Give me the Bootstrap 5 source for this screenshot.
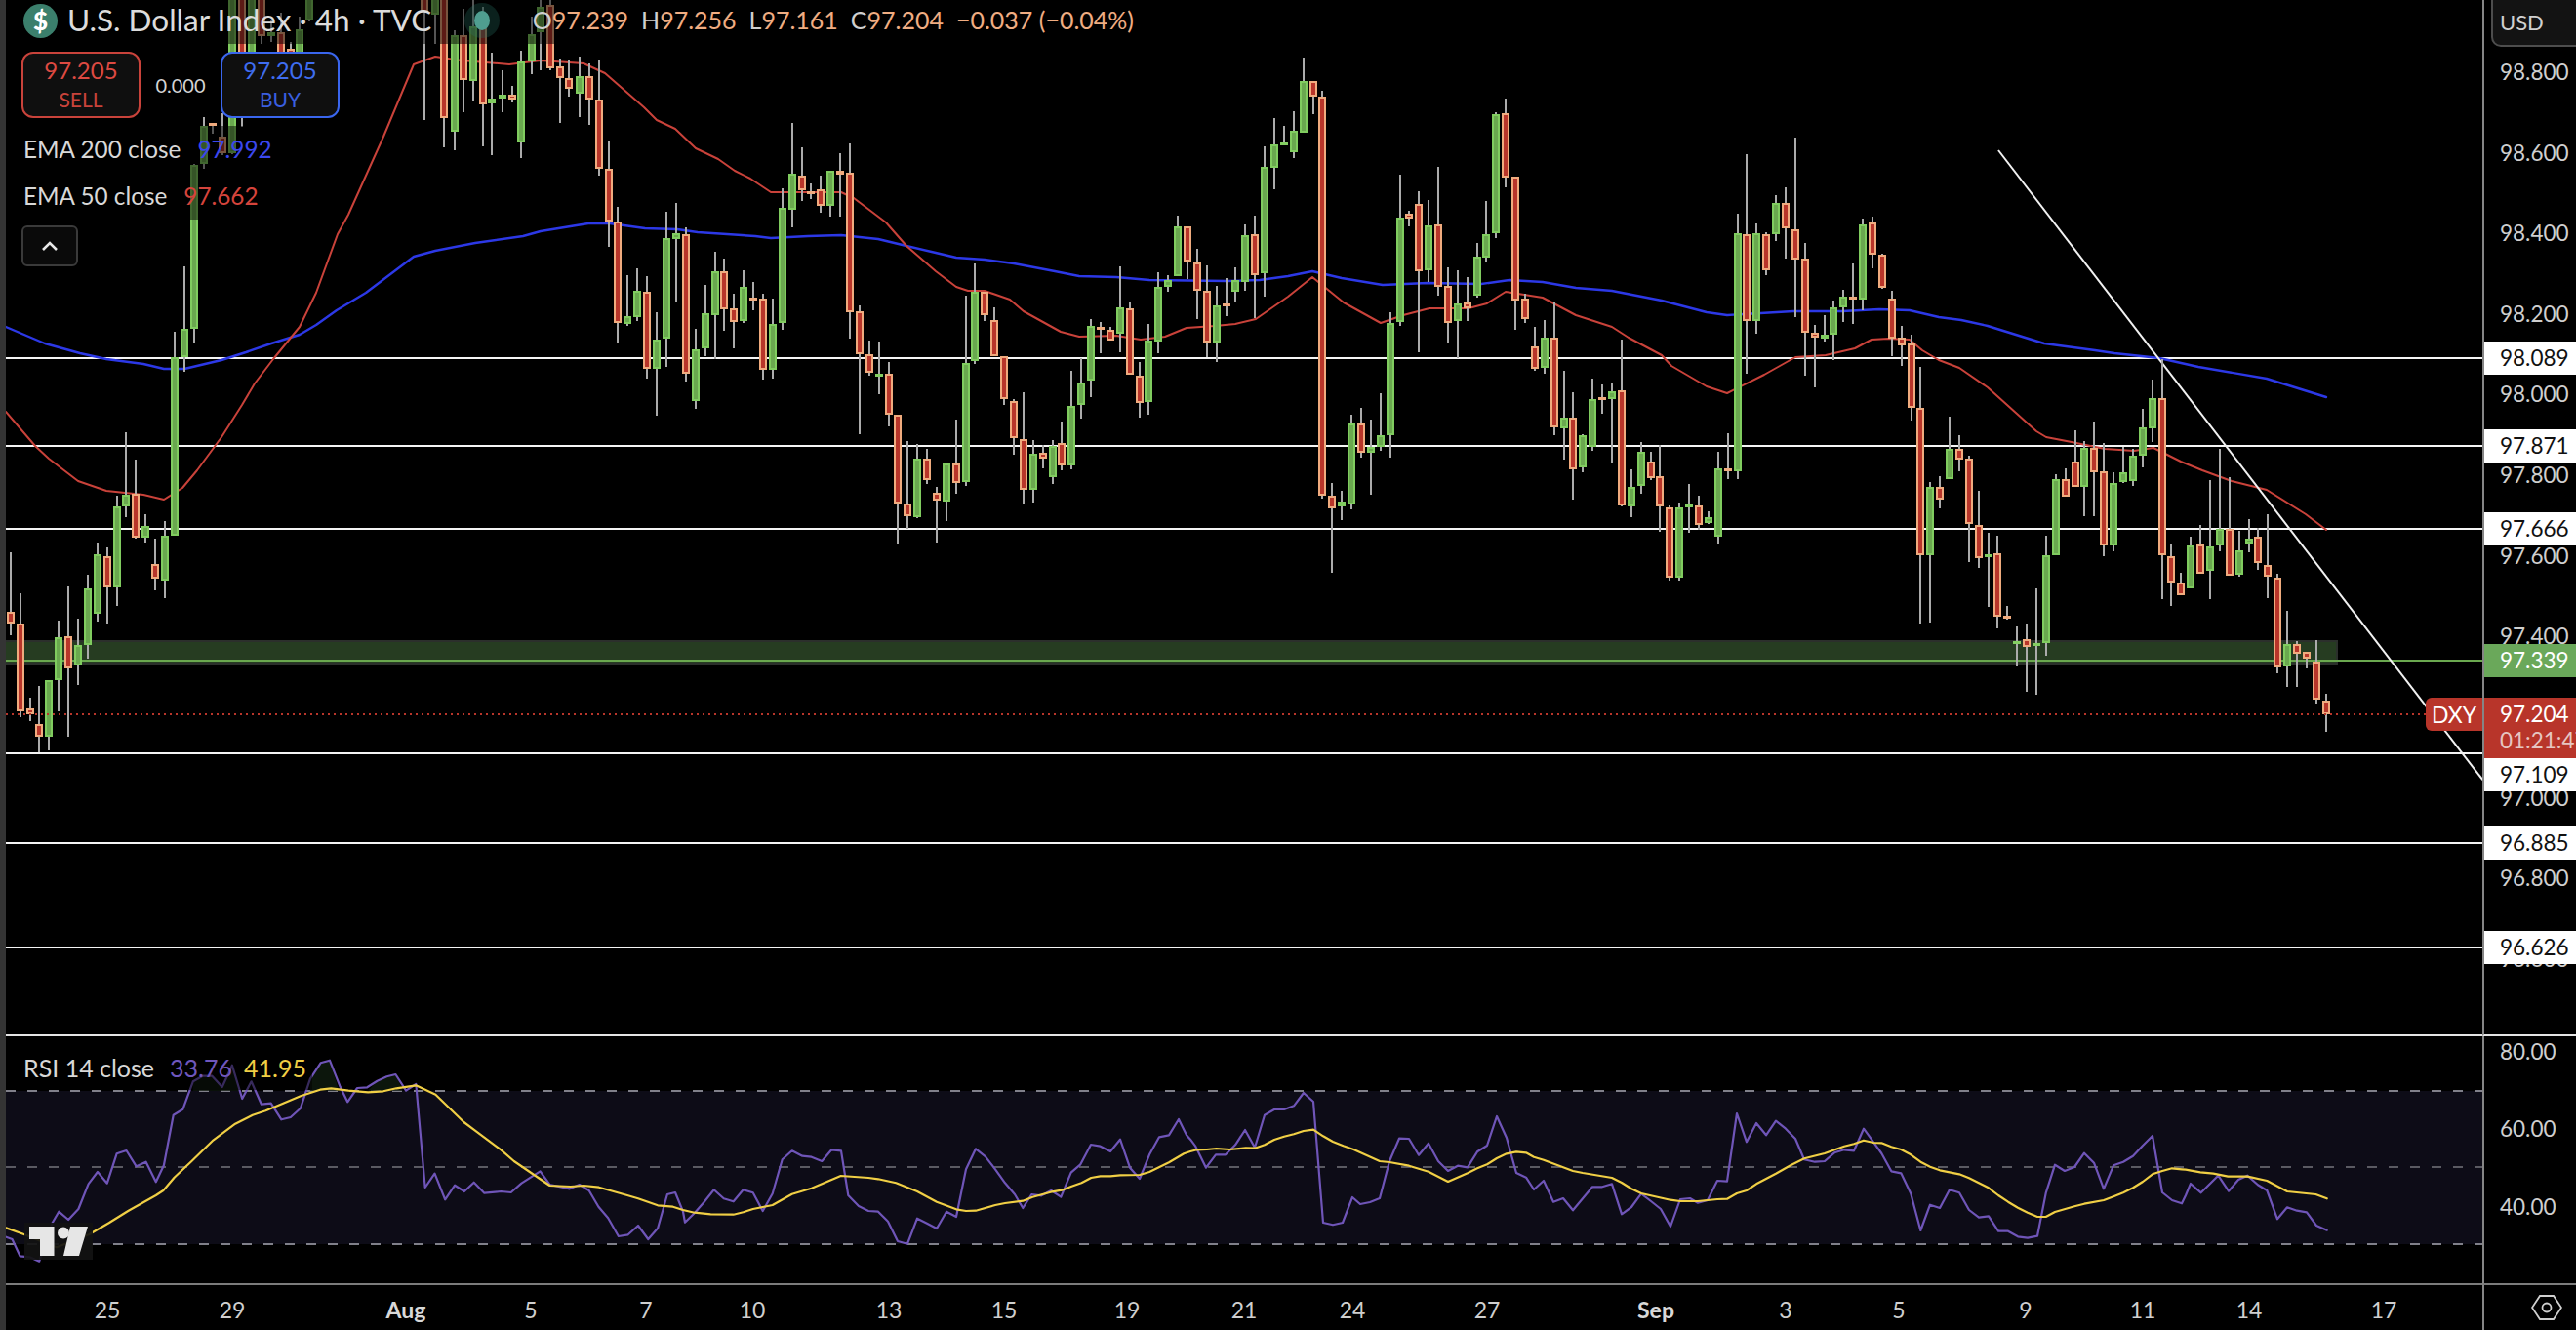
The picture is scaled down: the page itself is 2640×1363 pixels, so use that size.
<!DOCTYPE html>
<html lang="en">
<head>
<meta charset="utf-8">
<title>U.S. Dollar Index chart</title>
<link href="https://cdn.jsdelivr.net/npm/bootstrap@5.3.0/dist/css/bootstrap.min.css" rel="stylesheet">
<style>
html,body{background:#000;margin:0;overflow:hidden}
body{font-family:Lato,"Liberation Sans",sans-serif;color:#d8d8d8}
.tv-frame{display:grid;grid-template-columns:6px 2538px 96px;grid-template-rows:1062px 255px 46px;width:2640px;height:1363px}
.tv-strip{grid-row:1/-1;background:#343434}
.tv-pane{position:relative;overflow:hidden;border-bottom:2px solid #e4e4e4}
.tv-pane svg,.tv-rsi svg{display:block}
.tv-rsi{position:relative;overflow:hidden;border-bottom:2px solid #7c7c7c}
.tv-axis{position:relative;overflow:hidden;border-left:2px solid #858585;font-size:22.5px;line-height:34px;color:#cfcfcf;white-space:nowrap}
.tv-axis-main{border-bottom:2px solid #e4e4e4}
.tv-axis-rsi{border-bottom:2px solid #7c7c7c}
.tv-tick{position:absolute;left:16px}
.tv-flag{position:absolute;left:0;right:0;height:34px;padding-left:16px}
.flag-white{background:#fff;color:#111}
.flag-green{background:#6aa85a;color:#fff}
.flag-red{background:#b8352a;color:#fff;height:62px}
.flag-timer{color:#e6c6c2;line-height:26px;margin-top:-3px}
.tv-usd{position:absolute;left:7px;top:-2px;right:-4px;height:50px;padding:4px 0 0 7px;background:#131313;border:2px solid #4d4d4d;border-radius:0 0 0 10px;font-size:22px;line-height:38px;color:#d0d0d0}
.tv-symtag{position:absolute;left:2480px;top:715px;width:58px;height:34px;line-height:34px;text-align:center;background:#b8352a;color:#fff;font-size:23px;border-radius:6px 0 0 6px}
.tv-legend{position:absolute;left:0;top:0}
.tv-titlerow{height:45px;padding:0 16px 3px 18px;background:rgba(0,0,0,.5);width:1172px}
.tv-sym{width:35px;height:35px;border-radius:50%;background:#3b7f6c;color:#fff;font-weight:900;font-size:26px;line-height:35px;text-align:center;flex:none}
.tv-name{font-size:31.5px;color:#dcdcdc;margin-left:10px;width:382px;white-space:nowrap}
.tv-live{width:36px;height:36px;border-radius:50%;background:rgba(40,120,105,.28);margin-left:26px;flex:none}
.tv-live i{width:16px;height:20px;border-radius:50%;background:#4f9e90;display:block}
.tv-ohlc{margin-left:34px;font-size:25px;color:#f0ad82;gap:13px;white-space:nowrap}
.tv-ohlc b{font-weight:400;color:#cfcfcf}
.tv-trade{margin:8px 0 0 16px;height:68px}
.btn.tv-order{width:122px;height:68px;padding:0;background:#0f0f0f;border-width:2px;border-style:solid;border-radius:12px;display:flex;flex-direction:column;align-items:center;justify-content:center;font-size:24px;line-height:30px}
.tv-order small{font-size:21px;line-height:30px}
.btn.order-sell{border-color:#c9433b;color:#dd4a42}
.order-sell small{color:#c9433b}
.btn.order-buy{border-color:#3a66ee;color:#3f6df0}
.order-buy small{color:#3a5fe0}
.tv-spread{width:82px;text-align:center;font-size:20px;color:#d4d4d4}
.tv-emas{margin-top:8px;align-items:flex-start}
.tv-ind{height:48px;line-height:48px;padding:0 6px 0 18px;background:rgba(0,0,0,.5);font-size:24.3px;gap:17px;white-space:nowrap}
.tv-ind-name{color:#d8d8d8}
.val-blue{color:#3b47ee}
.val-red{color:#d5443c}
.val-purple{color:#6f57bd}
.val-yellow{color:#f0cf45}
.btn.tv-toggle{margin:6px 0 0 16px;width:58px;height:42px;padding:0;background:#0a0a0a;border:2px solid #3a3a3a;border-radius:6px;display:flex;align-items:center;justify-content:center}
.tv-rsi-legend{position:absolute;left:0;top:9px}
.tv-rsi-legend .tv-ind{height:46px;line-height:46px;font-size:25px;gap:12px}
.tv-tvlogo{position:absolute;left:19px;top:191px;width:70px;height:38px;background:rgba(18,18,18,.93);display:flex;align-items:center;justify-content:center}
.tv-xaxis{position:relative;font-size:23px;color:#cfcfcf;line-height:46px;overflow:hidden}
.tv-xtick{position:absolute;top:2px;transform:translateX(-50%)}
.tv-xtick.fw-month{font-weight:700;color:#d8d8d8}
.tv-gear{position:relative;border-left:2px solid #858585}
.tv-gear svg{position:absolute;left:48px;top:9px}
</style>
</head>
<body>
<div class="tv-frame d-grid">
  <div class="tv-strip"></div>

  <div class="tv-pane">
    <svg id="mainSvg" width="2538" height="1060" viewBox="6 0 2538 1060" xmlns="http://www.w3.org/2000/svg" aria-label="price chart"></svg>
    <div class="tv-legend d-flex flex-column">
      <div class="tv-titlerow d-flex align-items-center">
        <div class="tv-sym">$</div>
        <div class="tv-name">U.S. Dollar Index · 4h · TVC</div>
        <div class="tv-live d-flex align-items-center justify-content-center"><i></i></div>
        <div class="tv-ohlc d-flex">
          <span><b>O</b>97.239</span><span><b>H</b>97.256</span><span><b>L</b>97.161</span><span><b>C</b>97.204</span><span>−0.037 (−0.04%)</span>
        </div>
      </div>
      <div class="tv-trade d-flex align-items-center">
        <button class="btn tv-order order-sell" type="button">97.205<small>SELL</small></button>
        <div class="tv-spread">0.000</div>
        <button class="btn tv-order order-buy" type="button">97.205<small>BUY</small></button>
      </div>
      <div class="tv-emas d-flex flex-column">
        <div class="tv-ind d-flex"><span class="tv-ind-name">EMA 200 close</span><span class="val-blue">97.992</span></div>
        <div class="tv-ind d-flex"><span class="tv-ind-name">EMA 50 close</span><span class="val-red">97.662</span></div>
      </div>
      <button class="btn tv-toggle" type="button" aria-label="collapse">
        <svg width="18" height="11" viewBox="0 0 18 11"><path d="M2 9 9 2l7 7" fill="none" stroke="#e8e8e8" stroke-width="2.6"/></svg>
      </button>
    </div>
    <div class="tv-symtag">DXY</div>
  </div>

  <div class="tv-axis tv-axis-main">
    <span class="tv-tick" style="top:57px">98.800</span>
    <span class="tv-tick" style="top:140px">98.600</span>
    <span class="tv-tick" style="top:222px">98.400</span>
    <span class="tv-tick" style="top:305px">98.200</span>
    <span class="tv-tick" style="top:387px">98.000</span>
    <span class="tv-tick" style="top:470px">97.800</span>
    <span class="tv-tick" style="top:553px">97.600</span>
    <span class="tv-tick" style="top:635px">97.400</span>
    <span class="tv-tick" style="top:801px">97.000</span>
    <span class="tv-tick" style="top:883px">96.800</span>
    <span class="tv-tick" style="top:966px">96.600</span>
    <div class="tv-usd">USD</div>
    <div class="tv-flag flag-white" style="top:350px">98.089</div>
    <div class="tv-flag flag-white" style="top:440px">97.871</div>
    <div class="tv-flag flag-white" style="top:525px">97.666</div>
    <div class="tv-flag flag-green" style="top:660px">97.339</div>
    <div class="tv-flag flag-red" style="top:715px">97.204<div class="flag-timer">01:21:47</div></div>
    <div class="tv-flag flag-white" style="top:777px">97.109</div>
    <div class="tv-flag flag-white" style="top:847px">96.885</div>
    <div class="tv-flag flag-white" style="top:954px">96.626</div>
  </div>

  <div class="tv-rsi">
    <svg id="rsiSvg" width="2538" height="253" viewBox="6 1062 2538 253" xmlns="http://www.w3.org/2000/svg" aria-label="RSI chart"></svg>
    <div class="tv-rsi-legend">
      <div class="tv-ind d-flex"><span class="tv-ind-name me-1">RSI 14 close</span><span class="val-purple">33.76</span><span class="val-yellow">41.95</span></div>
    </div>
    <div class="tv-tvlogo">
      <svg width="60" height="30" viewBox="0 0 60 30"><path fill="#e6e6e6" d="M0 0h25.5v30H11V13H0zM42 0h18l-9 30H35z"/><circle cx="35" cy="6.5" r="6" fill="#e6e6e6"/></svg>
    </div>
  </div>

  <div class="tv-axis tv-axis-rsi">
    <span class="tv-tick" style="top:-1px">80.00</span>
    <span class="tv-tick" style="top:78px">60.00</span>
    <span class="tv-tick" style="top:158px">40.00</span>
  </div>

  <div class="tv-xaxis">
    <span class="tv-xtick" style="left:104px">25</span>
    <span class="tv-xtick" style="left:232px">29</span>
    <span class="tv-xtick fw-month" style="left:410px">Aug</span>
    <span class="tv-xtick" style="left:538px">5</span>
    <span class="tv-xtick" style="left:656px">7</span>
    <span class="tv-xtick" style="left:765px">10</span>
    <span class="tv-xtick" style="left:905px">13</span>
    <span class="tv-xtick" style="left:1023px">15</span>
    <span class="tv-xtick" style="left:1149px">19</span>
    <span class="tv-xtick" style="left:1269px">21</span>
    <span class="tv-xtick" style="left:1380px">24</span>
    <span class="tv-xtick" style="left:1518px">27</span>
    <span class="tv-xtick fw-month" style="left:1691px">Sep</span>
    <span class="tv-xtick" style="left:1824px">3</span>
    <span class="tv-xtick" style="left:1940px">5</span>
    <span class="tv-xtick" style="left:2070px">9</span>
    <span class="tv-xtick" style="left:2190px">11</span>
    <span class="tv-xtick" style="left:2299px">14</span>
    <span class="tv-xtick" style="left:2437px">17</span>
  </div>
  <div class="tv-gear">
    <svg width="32" height="28" viewBox="0 0 32 28"><path d="M9 2h14l8 12-8 12H9L1 14z" fill="none" stroke="#cfcfcf" stroke-width="1.8"/><circle cx="16" cy="14" r="4.5" fill="none" stroke="#cfcfcf" stroke-width="1.8"/></svg>
  </div>
</div>

<script>
var NS='http://www.w3.org/2000/svg';
function el(p,n,a){var e=document.createElementNS(NS,n);for(var k in a)e.setAttribute(k,a[k]);p.appendChild(e);return e}
function pts(s,sx,ox,sy,oy){return s.trim().split(/\s+/).map(function(q){var c=q.split(',');return [ox+c[0]/sx,oy+c[1]/sy]})}
function line(p,arr,col,w){el(p,'polyline',{points:arr.map(function(c){return c[0].toFixed(1)+','+c[1].toFixed(1)}).join(' '),fill:'none',stroke:col,'stroke-width':w,'stroke-linejoin':'round','stroke-linecap':'round'})}
function rect(p,x,y,w,h,f){el(p,'rect',{x:x,y:y,width:w,height:h,fill:f,'shape-rendering':'crispEdges'})}

var M=document.getElementById('mainSvg'),R=document.getElementById('rsiSvg');

/* support / resistance */
rect(M,6,656,2390,25,'#2b2f2b');rect(M,6,658,2388,21,'#263c21');
[367,457,542,772,864,971].forEach(function(y){rect(M,6,y-1,2538,2,'#f4f4f4')});
rect(M,6,676,2538,2,'#6aa84f');

/* moving averages */
var blue=[[6,335],[46,352],[82,362],[109,368],[147,373],[168,378],[189,378],[227,369],[252,361],[278,352],[307,343],[324,333],[345,318],[375,300],[424,263],[446,257],[487,249],[536,242],[554,237],[603,229],[625,229],[661,234],[694,235],[715,238],[774,242],[790,244],[828,242],[862,241],[900,245],[929,252],[959,259],[980,264],[1009,266],[1039,270],[1081,278],[1106,283],[1144,284],[1178,287],[1258,288],[1291,287],[1320,283],[1345,278],[1375,285],[1417,292],[1463,290],[1518,291],[1547,287],[1581,289],[1615,295],[1652,298],[1703,308],[1749,320],[1770,323],[1804,321],[1838,319],[1888,319],[1926,317],[1957,318],[1987,325],[2010,328],[2037,334],[2095,352],[2147,359],[2167,362],[2213,367],[2253,376],[2323,388],[2384,407]];
var red=[[6,422],[36,457],[50,470],[80,493],[109,503],[147,507],[168,512],[187,500],[202,482],[227,448],[248,415],[261,393],[280,368],[307,335],[324,300],[346,240],[357,220],[393,140],[424,66],[446,58],[473,62],[522,66],[554,62],[598,65],[620,75],[660,110],[673,123],[692,132],[713,152],[736,163],[753,175],[769,183],[790,197],[862,197],[875,203],[908,228],[929,252],[959,278],[980,294],[992,298],[1009,298],[1035,307],[1049,319],[1087,340],[1106,345],[1144,344],[1169,348],[1194,345],[1216,336],[1245,334],[1266,332],[1287,327],[1320,304],[1345,284],[1377,310],[1415,331],[1438,323],[1465,316],[1505,316],[1524,311],[1543,299],[1581,305],[1615,323],[1652,335],[1669,346],[1703,364],[1713,375],[1749,396],[1770,403],[1808,384],[1840,366],[1871,364],[1901,357],[1918,348],[1935,347],[1957,348],[1970,359],[1987,369],[2008,377],[2037,397],[2087,442],[2097,448],[2123,453],[2157,460],[2187,462],[2207,459],[2235,473],[2257,482],[2287,493],[2323,502],[2363,527],[2384,543]];
line(M,blue,'#2c38e6',2.4);
line(M,red,'#c9423a',2);

/* trend line */
el(M,'line',{x1:2048,y1:154,x2:2545,y2:800,stroke:'#f2f2f2','stroke-width':2});

/* candles: x kind bodyTop bodyBottom wickTop wickBottom, in the coordinates of each crop */
function candles(s,sx,ox,sy,oy){
  s.trim().split('\n').forEach(function(l){
    var c=l.trim().split(/\s+/),x=Math.round(ox+c[0]/sx),t=oy+c[2]/sy,b=oy+c[3]/sy,wt=oy+c[4]/sy,wb=oy+c[5]/sy;
    var g=c[1]=='g';
    rect(M,x-1,Math.round(wt),2,Math.max(1,Math.round(wb-wt)),'#ababab');
    var T=Math.round(t),B=Math.round(b);
    if(B-T<3){rect(M,x-4,T-1,8,3,g?'#84cf62':'#f0ab7e');return}
    rect(M,x-4,T,8,B-T,g?'#80cc5f':'#f0ab7e');
    if(B-T>4)rect(M,x-2,T+2,4,B-T-4,g?'#6aa84f':'#b8352a');
  });
}
candles(`26 r 982 1018 798 1052
50 r 1018 1288 925 1307
73 r 1279 1296 1245 1316
95 r 1327 1366 1210 1415
118 g 1190 1366 1190 1407
142 g 1060 1190 1008 1287
166 r 1057 1154 903 1364
190 g 1084 1147 1002 1205
213 g 910 1084 867 1124
237 g 805 988 768 1010
261 r 811 905 783 1016
285 g 658 905 625 965
306 g 622 658 430 692
330 r 618 754 514 758
353 g 718 752 681 767
377 r 835 880 756 914
401 g 748 884 702 938
425 g 197 748 120 748`,2.376,0,3,300);
candles(`423 g 1011 1098 819 1143
446 g 508 1011 504 1053
468 g 388 505 360 520
488 r 382 382 378 410
511 r 420 470 348 478
533 g -10 472 -10 472
555 r -10 300 -10 390
578 g -10 270 -10 280
600 r -10 110 -10 135
622 g 100 112 60 130
644 r 100 200 40 260
667 r 150 220 130 240
688 g 90 190 50 220
710 g -10 63 -10 66
975 r -10 38 -10 368
998 g -10 45 -10 135
1020 r -10 363 -10 452
1044 g 108 405 92 460
1063 r 108 247 28 347
1086 g 82 250 -10 312
1108 r 82 322 20 450
1130 g 302 318 163 477
1153 g 292 302 215 345
1175 r 290 307 265 317
1197 g 190 438 155 485
1220 g 105 190 50 227
1242 g 22 100 -10 215
1263 r 15 210 -10 215
1285 r 205 240 180 377
1307 r 240 273 183 297
1330 g 235 288 175 362
1352 r 233 305 195 385
1375 r 307 520 183 540
1397 r 520 680 435 758
1419 r 680 993 636 1056
1441 g 972 996 846 1002
1463 g 894 975 825 987`,2.24,0,3,0);
candles(`7 r 598 835 550 866
31 g 745 835 660 977
54 g 433 740 350 827
78 g 418 434 325 632
102 r 419 850 400 875
125 g 775 934 712 959
149 g 664 772 577 797
173 g 535 670 475 806
195 r 535 652 495 716
218 r 647 691 603 770
242 g 583 686 531 692
266 r 618 618 568 654
289 r 619 838 603 866
313 g 697 838 618 863
337 g 340 692 280 716
361 g 235 344 78 398
384 r 241 286 153 318
406 r 291 291 265 312
430 r 283 334 240 353
453 g 226 334 226 368
477 r 226 236 172 368
501 r 232 661 141 740
525 r 658 790 640 1037
548 r 790 847 748 857
572 g 852 852 750 911
596 r 850 976 813 1010
618 r 976 1249 976 1373
641 r 1249 1288 1057 1327
665 g 1111 1289 1066 1295
688 r 1111 1177 1080 1187
712 r 1216 1240 1197 1367
736 g 1126 1243 1126 1302
760 r 1126 1184 990 1217
783 g 817 1181 610 1196
805 g 598 811 510 818
829 r 596 670 596 686
852 r 683 796 645 796
876 r 794 928 794 945
900 r 932 1048 926 1098
924 r 1049 1207 906 1250
947 g 1096 1207 1053 1244
971 r 1091 1111 1068 1140
995 g 1070 1168 1053 1187
1017 r 1061 1132 996 1145
1040 g 947 1132 840 1142
1064 g 875 946 802 989
1088 g 703 871 682 921
1111 r 709 709 690 785
1135 r 713 748 705 748
1159 g 646 727 519 783
1183 r 647 853 628 853
1206 r 854 940 813 984
1228 g 748 937 696 974
1252 g 583 751 538 788
1275 g 562 583 546 597
1299 g 397 550 363 550
1323 r 397 505 397 558
1347 r 506 595 466 681
1370 r 593 753 517 798
1394 g 640 754 579 812
1418 r 636 636 556 674
1439 g 562 598 522 630
1463 g 424 568 390 594
1487 r 421 546 364 680
1510 g 214 541 151 612
1534 g 143 217 64 284
1558 g 141 141 88 147`,2.376,660,3,100);
candles(`14 g 236 296 180 314
38 g 91 240 26 240
61 r 93 136 93 187
84 r 138 1283 120 1290
107 r 1283 1320 1246 1503
130 g 1300 1314 1267 1352
154 g 1076 1308 1050 1322
178 r 1076 1158 1030 1172
202 g 1141 1158 1065 1280
225 g 1110 1141 988 1153
249 g 788 1110 757 1175
273 g 483 785 362 795
294 r 474 488 465 510
318 r 446 639 409 870
342 g 508 636 434 670
365 r 505 684 339 708
389 r 679 786 627 846
413 g 732 782 636 888
437 r 729 746 655 780
460 g 597 707 557 714
482 g 533 600 437 612
506 g 188 530 182 542
529 r 186 369 143 398
553 r 368 723 368 808
577 r 718 776 703 786
601 r 855 919 797 923
624 g 830 916 778 932
648 r 828 1085 728 1108
672 g 1058 1088 924 1178
693 r 1057 1208 986 1295
717 g 1110 1202 1105 1214
741 g 1006 1143 947 1155
764 r 1002 1002 964 1047
788 g 984 1006 958 1190
812 r 979 1309 835 1315
836 g 1258 1312 1207 1343
860 g 1157 1255 1128 1275
883 r 1185 1231 1155 1236
905 r 1227 1314 1137 1385
928 r 1315 1518 1310 1525
952 g 1317 1517 1302 1525
976 g 1311 1311 1250 1391
1000 r 1309 1365 1283 1382
1023 g 1345 1362 1328 1365
1047 g 1205 1401 1157 1424
1071 r 1206 1206 1104 1235
1095 g 530 1213 473 1234
1116 r 533 782 302 932
1140 g 530 782 502 818
1164 r 533 636 526 650
1187 g 443 533 420 552
1211 r 441 514 398 602
1235 r 517 604 255 769
1259 r 601 816 557 937
1283 r 816 828 793 973
1306 g 821 831 765 840
1328 g 741 819 723 895
1351 g 712 741 692 783
1375 r 713 713 616 790
1399 g 505 719 488 750
1423 r 499 590 482 630
1446 r 592 685 587 689
1470 r 716 832 694 882
1494 r 830 850 796 912
1518 r 845 1031 821 1067`,2.376,1320,2.8,50);
candles(`204 r 355 808 228 1016
234 g 598 806 583 1016
264 r 598 637 565 665
294 g 481 572 381 574
324 r 481 512 438 548
354 r 511 712 502 830
384 r 713 815 610 848
414 g 806 806 738 965
441 r 802 997 747 1031
471 r 996 996 963 1006
501 g 1075 1075 1026 1148
531 r 1066 1090 1018 1229
561 g 1081 1081 909 1235
591 g 808 1076 747 1115
621 g 574 808 558 808
651 r 574 628 541 628
681 r 520 598 423 598
708 g 478 596 457 689
738 r 478 553 396 686
768 r 550 776 463 812
798 g 586 776 552 795
828 g 553 583 473 583
858 g 502 578 480 594
888 g 415 502 357 537
918 g 325 416 267 459
948 r 325 808 205 942
975 r 811 892 771 962
1005 r 892 931 862 931
1035 g 778 910 750 910
1065 r 775 865 715 865
1095 g 781 856 576 942
1125 g 727 778 480 795
1155 r 725 871 568 871
1185 g 791 868 732 872
1215 g 755 772 696 798
1242 r 751 832 723 852
1272 r 836 874 681 939
1302 r 875 1153 865 1172
1332 g 1079 1150 978 1211
1362 r 1081 1111 1071 1211
1392 r 1105 1126 1105 1155
1422 r 1133 1251 1068 1262
1452 r 1255 1297 1233 1349`,3,1900,3,300);

/* last price line */
el(M,'line',{x1:6,y1:732,x2:2486,y2:732,stroke:'#b8352a','stroke-width':2,'stroke-dasharray':'2 4'});

/* RSI pane */
rect(R,6,1118,2538,157,'#0d0c17');
[[1118,'#80808a'],[1196,'#5a5a62'],[1275,'#80808a']].forEach(function(d){
  el(R,'line',{x1:6,y1:d[0],x2:2544,y2:d[0],stroke:d[1],'stroke-width':2,'stroke-dasharray':'10 12','shape-rendering':'crispEdges'});
});
['443,233 443,205 465,188 487,188 510,222 533,155 548,233','712,233 712,197 736,148 757,140 778,233','845,233 866,203 888,190 908,183 925,233'].forEach(function(s){
  el(R,'polygon',{points:pts(s,2.24,0,3,1040).map(function(c){return c.join(',')}).join(' '),fill:'#0c160c'});
});
var purple=[].concat(
 pts('14,683 28,690 46,742 68,745 90,758 105,700 120,640 135,605 157,630 180,597 203,520 224,483 246,518 268,427 290,417 313,466 335,452 358,514 376,463 398,308 420,290 443,205 465,188 487,188 510,222 533,155 556,258 577,205 600,275 622,272 646,322 667,315 690,287 712,197 736,148 757,140 780,218 798,268 820,225 843,223 866,203 888,190 908,183 932,233 955,213 976,531 998,488 1022,568 1044,524 1066,543 1088,515 1112,548 1150,543 1173,546 1197,518 1240,481 1262,522 1308,535 1330,522 1352,540 1374,590 1396,625 1420,681 1442,676 1465,648 1488,690 1510,656 1532,552 1550,546',2.24,0,3,1040),
 pts('0,425 6,458 35,430 65,395 95,358 125,385 155,394 185,358 215,367 245,423 275,370 305,265 335,238 367,254 395,257 427,270 457,235 486,238 508,375 540,408 570,423 600,425 630,455 660,516 690,524 720,446 750,461 780,477 810,425 840,441 870,295 900,232 930,256 960,295 990,337 1020,372 1045,414 1072,372 1102,376 1132,360 1162,380 1193,305 1222,280 1254,219 1283,224 1314,240 1344,203 1374,290 1404,324 1434,250 1464,196 1494,190 1524,141 1548,190',3,700,3,1100),
 pts('0,203 15,223 48,290 78,250 108,250 138,220 168,174 198,228 228,128 258,111 288,111 318,100 348,60 378,87 408,459 438,466 468,459 498,381 522,402 552,396 582,384 612,270 642,200 672,201 702,251 732,215 762,270 792,300 822,284 852,289 882,241 912,222 942,132 972,198 1002,306 1032,320 1056,357 1086,330 1116,395 1146,384 1176,421 1206,385 1236,349 1266,349 1296,340 1326,433 1356,411 1386,370 1416,393 1446,417 1476,471 1506,387 1536,384',3,1220,3,1100),
 pts('0,398 30,390 60,330 90,332 120,123 150,211 180,153 210,190 240,146 270,170 300,201 327,265 360,272 390,270 420,244 450,235 480,238 510,170 540,211 565,246 595,301 625,307 655,370 685,483 714,404 744,414 774,358 804,367 834,420 864,443 894,439 924,485 954,485 984,502 1014,506 1044,500 1070,368 1098,281 1128,300 1158,288 1188,245 1218,275 1248,355 1278,283 1308,272 1338,254 1368,222 1398,192 1428,366 1458,390 1488,400',3,1740,3,1100),
 pts('0,555 15,519 47,547 100,494 132,542 162,507 190,494 222,523 250,540 282,628 312,592 342,602 372,607 402,648 434,662',3,2240,3,1040));
var yellow=[].concat(
 pts('14,655 55,675 130,715 205,675 250,640 295,602 358,555 375,540 400,500 440,450 490,385 540,335 580,308 610,295 650,272 690,250 735,230 760,226 800,233 845,238 880,235 910,226 955,217 1000,245 1065,330 1090,355 1150,415 1180,450 1262,525 1310,528 1340,525 1375,530 1440,555 1465,565 1510,586 1545,590',2.24,0,3,1040),
 pts('0,420 35,428 85,433 155,434 185,427 215,417 275,405 335,371 395,353 485,315 570,321 600,325 655,337 720,363 780,395 840,418 870,423 900,422 960,405 990,399 1045,392 1075,380 1130,365 1165,359 1195,347 1225,337 1255,321 1283,316 1314,316 1344,313 1404,312 1434,303 1494,274 1540,247',3,700,3,1100),
 pts('0,240 20,235 50,234 80,231 120,234 170,229 198,230 228,220 258,204 288,194 318,187 348,177 378,173 408,193 438,210 470,223 500,233 582,270 612,273 672,284 732,302 792,333 852,307 882,292 912,280 942,261 972,247 1002,241 1032,244 1056,257 1086,266 1176,300 1206,306 1296,321 1326,336 1356,355 1386,369 1476,389 1506,393',3,1220,3,1100),
 pts('0,393 60,387 90,386 120,369 150,360 180,340 240,308 285,283 327,262 390,246 450,224 480,217 510,206 540,213 565,214 595,226 625,234 655,250 685,272 714,287 744,298 804,310 834,322 894,352 924,375 954,395 984,413 1014,428 1044,441 1070,441 1098,426 1158,409 1188,401 1248,390 1278,379 1308,367 1338,352 1368,333 1398,310 1428,300 1458,292 1488,295',3,1740,3,1100),
 pts('0,476 45,484 85,488 130,497 190,497 250,510 312,543 400,552 434,565',3,2240,3,1040));
line(R,purple,'#6f55b8',2.2);
line(R,yellow,'#f0cf45',2.2);
</script>
<script src="https://cdn.jsdelivr.net/npm/bootstrap@5.3.0/dist/js/bootstrap.bundle.min.js"></script>
</body>
</html>
